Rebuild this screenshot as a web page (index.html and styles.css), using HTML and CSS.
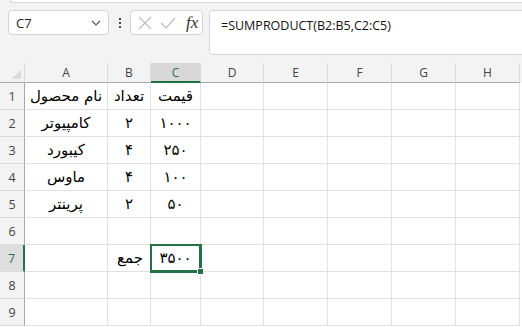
FILE: index.html
```html
<!DOCTYPE html>
<html lang="fa">
<head>
  <meta charset="UTF-8" />
  <title>Sheet</title>
  <link rel="stylesheet" href="styles.css">
</head>
<body>
  <div class="toolbar">
    <div class="top-strip"></div>
    <div class="bar">
      <div class="name-box">
        <span>C7</span>
        <svg width="10" height="6" viewBox="0 0 10 6"><path d="M1 1 L5 5 L9 1" fill="none" stroke="#555" stroke-width="1.2"/></svg>
      </div>
      <div class="dots"><i></i><i></i><i></i></div>
      <div class="fx-box">
        <svg width="14" height="14" viewBox="0 0 14 14"><path d="M1 1 L13 13 M13 1 L1 13" stroke="#bdbdbd" stroke-width="1.2"/></svg>
        <svg width="16" height="12" viewBox="0 0 16 12"><path d="M1 6 L6 11 L15 1" fill="none" stroke="#bdbdbd" stroke-width="1.2"/></svg>
        <span class="fx">fx</span>
      </div>
      <div class="formula">=SUMPRODUCT(B2:B5,C2:C5)</div>
    </div>
  </div>

  <div class="sheet">
    <div class="row head">
      <div class="corner"></div>
      <div>A</div><div>B</div><div class="sel">C</div><div>D</div><div>E</div><div>F</div><div>G</div><div>H</div>
    </div>
    <div class="row">
      <div class="num">1</div>
      <div class="c">نام محصول</div><div class="c">تعداد</div><div class="c">قیمت</div><div></div><div></div><div></div><div></div><div></div>
    </div>
    <div class="row">
      <div class="num">2</div>
      <div class="c">کامپیوتر</div><div class="c">۲</div><div class="c">۱۰۰۰</div><div></div><div></div><div></div><div></div><div></div>
    </div>
    <div class="row">
      <div class="num">3</div>
      <div class="c">کیبورد</div><div class="c">۴</div><div class="c">۲۵۰</div><div></div><div></div><div></div><div></div><div></div>
    </div>
    <div class="row">
      <div class="num">4</div>
      <div class="c">ماوس</div><div class="c">۴</div><div class="c">۱۰۰</div><div></div><div></div><div></div><div></div><div></div>
    </div>
    <div class="row">
      <div class="num">5</div>
      <div class="c">پرینتر</div><div class="c">۲</div><div class="c">۵۰</div><div></div><div></div><div></div><div></div><div></div>
    </div>
    <div class="row">
      <div class="num">6</div>
      <div></div><div></div><div></div><div></div><div></div><div></div><div></div><div></div>
    </div>
    <div class="row">
      <div class="num sel">7</div>
      <div></div><div class="r">جمع</div><div class="c active">۳۵۰۰<span class="handle"></span></div><div></div><div></div><div></div><div></div><div></div>
    </div>
    <div class="row">
      <div class="num">8</div>
      <div></div><div></div><div></div><div></div><div></div><div></div><div></div><div></div>
    </div>
    <div class="row">
      <div class="num">9</div>
      <div></div><div></div><div></div><div></div><div></div><div></div><div></div><div></div>
    </div>
  </div>
</body>
</html>
```

FILE: styles.css
```css
* {
  box-sizing: border-box;
  margin: 0;
  padding: 0;
}

body {
  width: 522px;
  height: 327px;
  overflow: hidden;
  background: #ffffff;
  font-family: 'Open Sans', 'Noto Sans', sans-serif;
}

.toolbar {
  height: 63px;
  background: #f3f3f3;
  overflow: hidden;
}

.top-strip {
  height: 3px;
  margin-left: 10px;
  background: #ffffff;
  border-bottom: 1px solid #d6d6d6;
  border-left: 1px solid #d6d6d6;
  border-bottom-left-radius: 5px;
}

.bar {
  display: flex;
  align-items: flex-start;
  padding: 7px 0 0 8px;
}

.name-box {
  width: 101px;
  height: 25px;
  background: #fff;
  border: 1px solid #d4d4d4;
  border-radius: 4px;
  display: flex;
  align-items: center;
  justify-content: space-between;
  padding: 0 7px 0 7px;
  font-size: 13px;
  color: #222;
}

.dots {
  width: 21px;
  height: 25px;
  display: flex;
  flex-direction: column;
  align-items: center;
  justify-content: center;
  gap: 2px;
}

.dots i {
  width: 2px;
  height: 2px;
  background: #444;
}

.fx-box {
  width: 73px;
  height: 25px;
  background: #fff;
  border: 1px solid #d4d4d4;
  border-radius: 4px;
  display: flex;
  align-items: center;
  gap: 8px;
  padding-left: 7px;
}

.fx {
  font-family: 'Liberation Serif', serif;
  font-style: italic;
  font-size: 17px;
  color: #333;
  margin-left: 2px;
}

.formula {
  margin-left: 6px;
  flex: 1;
  height: 45px;
  margin-right: -10px;
  background: #fff;
  border: 1px solid #d4d4d4;
  border-radius: 4px;
  padding: 6px 0 0 11px;
  font-size: 12.5px;
  color: #111;
}

.row {
  display: grid;
  grid-template-columns: 25px 83px 43px 50px 63px 64px 64px 64px 64px;
  height: 27px;
}

.row > div {
  border-right: 1px solid #e1e1e1;
  border-bottom: 1px solid #e1e1e1;
  display: flex;
  align-items: center;
  font-family: 'DejaVu Sans', sans-serif;
  font-size: 15px;
  color: #000;
  position: relative;
}

.row > .c {
  justify-content: center;
}

.row > .r {
  justify-content: flex-end;
  padding-right: 7px;
}

.row.head {
  height: 20px;
  background: #f3f3f3;
}

.row.head > div {
  justify-content: center;
  font-family: 'Open Sans', sans-serif;
  font-size: 12px;
  color: #444;
  border-right-color: #dadada;
  border-bottom-color: #a8a8a8;
}

.row.head > .sel {
  background: #d8d8d8;
  color: #217346;
  border-bottom: 2px solid #217346;
}

.corner {
  background: linear-gradient(135deg, transparent 60%, #dcdcdc 60%) no-repeat right 3px bottom 3px / 12px 12px;
}

.row > .num {
  background: #f3f3f3;
  justify-content: center;
  font-family: 'Open Sans', sans-serif;
  font-size: 12.5px;
  color: #444;
  border-right-color: #a8a8a8;
  border-bottom-color: #dadada;
}

.row > .num.sel {
  background: #dedede;
  color: #217346;
  border-right: 2px solid #217346;
}

.row > .active {
  z-index: 2;
  border-color: transparent;
  box-shadow: 0 0 0 1px #217346, inset 0 0 0 1px #217346;
  outline: 1px solid #217346;
  outline-offset: -1px;
}

.handle {
  position: absolute;
  right: -4px;
  bottom: -4px;
  width: 5px;
  height: 5px;
  background: #217346;
  border: 1px solid #fff;
  box-sizing: content-box;
}
```
